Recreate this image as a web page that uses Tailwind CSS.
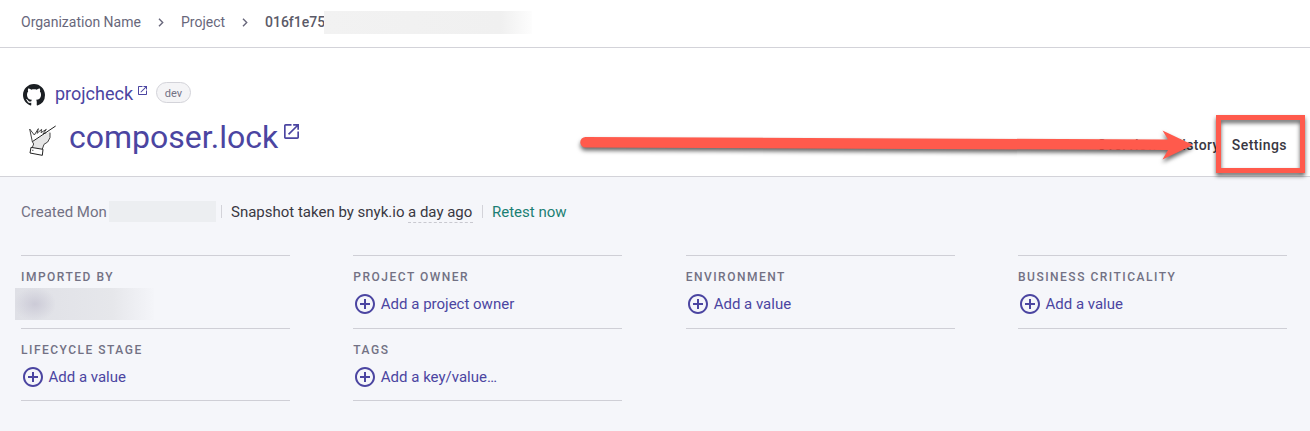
<!DOCTYPE html>
<html lang="en">
<head>
<meta charset="utf-8">
<title>composer.lock</title>
<script src="https://cdn.jsdelivr.net/npm/@tailwindcss/browser@4"></script>
</head>
<body class="relative h-[431px] w-[1310px] overflow-hidden bg-[#f5f6fa] font-['Roboto',sans-serif] text-[15px] text-[#393842]">
<svg class="hidden">
  <symbol id="plus" viewBox="0 0 24 24"><path fill="currentColor" d="M13 7h-2v4H7v2h4v4h2v-4h4v-2h-4V7zm-1-5C6.480 2 2 6.480 2 12s4.480 10 10 10 10-4.480 10-10S17.520 2 12 2zm0 18c-4.410 0-8-3.590-8-8s3.590-8 8-8 8 3.590 8 8-3.590 8-8 8z"/></symbol>
  <symbol id="ext" viewBox="3 3 18 18"><path fill="currentColor" d="M19 19H5V5h7V3H5c-1.110 0-2 .9-2 2v14c0 1.100.89 2 2 2h14c1.100 0 2-.9 2-2v-7h-2v7zM14 3v2h3.590l-9.830 9.830 1.410 1.410L19 6.410V10h2V3h-7z"/></symbol>
  <symbol id="chev" viewBox="0 0 6 9"><path d="M1 .8 4.700 4.500 1 8.200" fill="none" stroke="currentColor" stroke-width="1.400"/></symbol>
</svg>

<nav class="flex h-12 items-center border-b border-[#d3d3d9] bg-white pb-[3px] pl-[21px] text-sm text-[#68677b]">
  <span class="w-[137px]">Organization Name</span>
  <svg class="h-[9px] w-[6px]"><use href="#chev"/></svg>
  <span class="ml-[17px] w-[61px]">Project</span>
  <svg class="h-[9px] w-[6px]"><use href="#chev"/></svg>
  <span class="ml-[17px] w-[59px] font-medium text-[#5b5a68]">016f1e75</span>
  <span class="h-[23px] w-[208px] bg-linear-to-r from-[#f2f2f2] via-[#f0f0f0] via-85% to-[#fdfdfd]"></span>
</nav>

<header class="flex h-[129px] justify-between border-b border-[#d3d3d9] bg-white pl-[21px] pr-[23px]">
  <div class="pt-[32px] text-[#4b45a1]">
    <div class="flex h-[26px] items-center">
      <svg class="ml-[2px] mt-[3px] size-[22px] text-[#1b1f23]" viewBox="0 0 16 16"><path fill="currentColor" d="M8 0C3.580 0 0 3.580 0 8c0 3.540 2.290 6.530 5.470 7.590.4.070.55-.17.55-.38 0-.19-.01-.82-.01-1.490-2.010.37-2.530-.49-2.690-.94-.09-.23-.48-.94-.82-1.130-.28-.15-.68-.52-.01-.53.63-.01 1.080.58 1.230.82.72 1.210 1.870.87 2.330.66.070-.52.28-.87.51-1.070-1.780-.2-3.640-.89-3.640-3.950 0-.87.31-1.590.82-2.150-.08-.2-.36-1.020.08-2.120 0 0 .67-.21 2.200.82.64-.18 1.320-.27 2-.27s1.360.09 2 .27c1.530-1.040 2.200-.82 2.200-.82.44 1.100.16 1.920.08 2.120.51.56.82 1.270.82 2.150 0 3.070-1.870 3.750-3.650 3.950.29.25.54.73.54 1.480 0 1.070-.01 1.930-.01 2.200 0 .21.15.46.55.38A8.010 8.010 0 0 0 16 8c0-4.420-3.580-8-8-8z"/></svg>
      <span class="ml-[10px] w-[83px] pt-[2px] text-[18px] leading-[26px]">projcheck</span>
      <svg class="-mt-[5px] size-[9px]"><use href="#ext"/></svg>
      <span class="-mt-[1px] ml-[9px] flex h-[21px] w-[35px] items-center justify-center rounded-full border border-[#d3d3d9] bg-[#f4f4f6] pt-[3px] text-[11px] text-[#727184]">dev</span>
    </div>
    <div class="mt-[10px] flex h-[42px] items-center">
      <svg class="ml-[4px] mt-[5px] size-8" viewBox="30 24 96 96" fill="none" stroke="#444" stroke-width="3" stroke-linejoin="round">
        <path stroke="none" fill="#e6e6e6" d="M52 94 56 84 52 77 105 46 105 65 98 78 87 85 82 99Z"/>
        <path d="M52 94 56 84 52 77 44 39 58 57M58 57 70 38 66 52 80 40 78 50 94 40 84 54 94 50M105 50V65L98 78 87 85 82 99"/>
        <path fill="#fff" stroke="#222" d="M48 94 84 100 82 118 45 111Z"/>
        <path stroke="#222" d="M52 77 122 30"/>
        <path stroke-width="4" d="M52 103h3"/>
      </svg>
      <span class="ml-[12px] w-[215px] text-[32px] leading-[42px]">composer.lock</span>
      <svg class="-mt-[11px] size-[15px]"><use href="#ext"/></svg>
    </div>
  </div>
  <div class="flex items-start gap-[12px] pt-[86px] text-sm leading-[22px] font-medium tracking-[0.42px] text-[#393842]">
    <span class="-ml-[2px] mr-[2px]">Overview</span><span>History</span><span>Settings</span>
  </div>
</header>

<main class="pl-[21px] pr-[23px] pt-[22px]">
  <div class="flex h-6 items-center text-[15px]">
    <span class="w-[88px] pt-[2px] text-[#727184]">Created Mon</span>
    <span class="h-[21px] w-[107px] bg-[#eceef1]"></span>
    <span class="ml-[5px] h-[13px] w-px bg-[#d3d3d9]"></span>
    <span class="ml-[9px] w-[177px] pt-[2px]">Snapshot taken by snyk.io</span>
    <span class="mt-[2px] h-[22px] w-[65px] border-b border-dashed border-[#c9c9d0] leading-[23px]">a day ago</span>
    <span class="ml-[9px] h-[13px] w-px bg-[#d3d3d9]"></span>
    <span class="ml-[9px] pt-[2px] text-[#1b7f74]">Retest now</span>
  </div>
  <div class="mt-[32px] grid grid-cols-[repeat(4,269px)] grid-rows-[74px_72px] justify-between">
    <section class="border-y border-[#cfcfd6] pt-[13px]">
      <h2 class="text-xs leading-4 font-medium tracking-[1.500px] text-[#727184]">IMPORTED BY</h2>
      <div class="mt-[3px] -ml-[6px] flex h-8 w-[139px] bg-linear-to-r from-[#dfe0e6] via-[#e6e7eb] via-70% to-[#f4f5f9]"><span class="h-8 w-[40px] bg-radial from-[#cccbd7] to-transparent to-75%"></span></div>
    </section>
    <section class="border-y border-[#cfcfd6] pt-[13px]">
      <h2 class="text-xs leading-4 font-medium tracking-[1.500px] text-[#727184]">PROJECT OWNER</h2>
      <div class="mt-[7px] flex h-6 items-center gap-[3.500px] text-[#4b45a1]"><svg class="size-6"><use href="#plus"/></svg>Add a project owner</div>
    </section>
    <section class="border-y border-[#cfcfd6] pt-[13px]">
      <h2 class="text-xs leading-4 font-medium tracking-[1.500px] text-[#727184]">ENVIRONMENT</h2>
      <div class="mt-[7px] flex h-6 items-center gap-[4px] text-[#4b45a1]"><svg class="size-6"><use href="#plus"/></svg>Add a value</div>
    </section>
    <section class="border-y border-[#cfcfd6] pt-[13px]">
      <h2 class="text-xs leading-4 font-medium tracking-[1.500px] text-[#727184]">BUSINESS CRITICALITY</h2>
      <div class="mt-[7px] flex h-6 items-center gap-[3.500px] text-[#4b45a1]"><svg class="size-6"><use href="#plus"/></svg>Add a value</div>
    </section>
    <section class="border-b border-[#cfcfd6] pt-[13px]">
      <h2 class="text-xs leading-4 font-medium tracking-[1.500px] text-[#727184]">LIFECYCLE STAGE</h2>
      <div class="mt-[7px] flex h-6 items-center gap-[3.500px] text-[#4b45a1]"><svg class="size-6"><use href="#plus"/></svg>Add a value</div>
    </section>
    <section class="border-b border-[#cfcfd6] pt-[13px]">
      <h2 class="text-xs leading-4 font-medium tracking-[1.500px] text-[#727184]">TAGS</h2>
      <div class="mt-[7px] flex h-6 items-center gap-[3.500px] text-[#4b45a1]"><svg class="size-6"><use href="#plus"/></svg>Add a key/value…</div>
    </section>
  </div>
</main>

<svg class="absolute left-[570px] top-[105px] h-[85px] w-[740px] drop-shadow-[0_3px_2px_rgba(0,0,0,0.6)]" viewBox="570 105 740 85">
  <path fill="#ff5a4c" d="M585.500 137 1168 139.500 1162.500 130.500 1193 145 1162.500 159.500 1168 150 585.500 147.500A5.250 5.250 0 0 1 585.500 137Z"/>
  <path fill="none" stroke="#ff5a4c" stroke-width="5" d="M1218.500 117.500h84v53h-84z"/>
</svg>
</body>
</html>
